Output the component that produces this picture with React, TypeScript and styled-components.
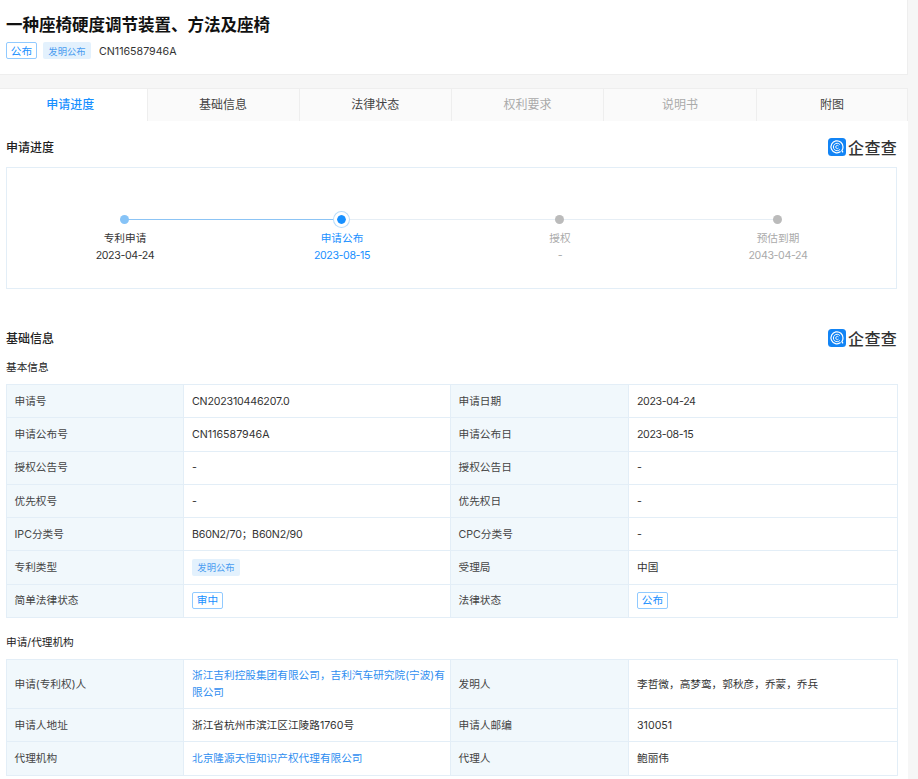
import React from "react";
import styled, { createGlobalStyle } from "styled-components";

const Global = createGlobalStyle`
  html, body { margin: 0; padding: 0; background: #f6f6f6; }
  body { font-family: Inter, "Noto Sans CJK SC", "Noto Sans", sans-serif; color: #333; }
  #root { width: 918px; height: 779px; overflow: hidden; }
`;
const Page = styled.div`
  width: 908px;
  display: flex;
  flex-direction: column;
  gap: 13px;
`;
const Header = styled.header`
  background: #fff;
  border: 1px solid #eee;
  border-width: 0 1px 1px 0;
  height: 75px;
  box-sizing: border-box;
  padding: 13px 6px 0;
`;
const Title = styled.h1`
  margin: 0;
  font-size: 16.5px;
  line-height: 24px;
  font-weight: 700;
  color: #111;
`;
const TagRow = styled.div`
  display: flex;
  align-items: center;
  margin-top: 5px;
  height: 17px;
`;
const OutlineTag = styled.span`
  display: inline-flex;
  align-items: center;
  justify-content: center;
  box-sizing: border-box;
  width: 31px;
  height: 17px;
  border: 1px solid #91caff;
  border-radius: 2px;
  font-size: 10.67px;
  color: #1890ff;
  background: #fff;
`;
const FillTag = styled.span`
  display: inline-flex;
  align-items: center;
  justify-content: center;
  width: 48px;
  height: 17px;
  border-radius: 2px;
  font-size: 9.33px;
  color: #4a9cf0;
  background: #e3f1fd;
`;
const PatentNo = styled.span`
  margin-left: 8px;
  padding-top: 2px;
  font-size: 10.67px;
  color: #333;
`;
const Gapped = styled.span`
  margin-left: 6px;
  display: inline-flex;
`;
const Tabs = styled.nav`
  display: grid;
  grid-template-columns: 147.5px 152px 152.5px 152px 153px 1fr;
  height: 33px;
  box-sizing: border-box;
  background: #fafafa;
  border-top: 1px solid #eee;
  border-right: 1px solid #eee;
`;
const Tab = styled.div<{ $active?: boolean; $disabled?: boolean }>`
  display: flex;
  align-items: center;
  justify-content: center;
  box-sizing: border-box;
  padding: 0 ${(p) => (p.$active ? 6 : 0)}px 3px 0;
  font-size: 12px;
  background: ${(p) => (p.$active ? "#fff" : "transparent")};
  color: ${(p) => (p.$active ? "#1890ff" : p.$disabled ? "#aaa" : "#444")};
  font-weight: ${(p) => (p.$active ? 500 : 400)};
  border-right: 1px solid #eee;
  &:last-child { border-right: 0; }
`;
const Content = styled.main`
  margin-top: -13px;
  background: #fff;
  padding: 0 11px 0 6px;
  height: 658px;
`;
const SectionHead = styled.div<{ $top: number }>`
  display: flex;
  justify-content: space-between;
  align-items: center;
  height: 20px;
  padding-top: ${(p) => p.$top}px;
`;
const SectionTitle = styled.h2`
  margin: 0;
  padding-top: 2px;
  font-size: 12px;
  line-height: 20px;
  font-weight: 500;
  color: #222;
`;
const Logo = styled.div`
  display: flex;
  align-items: center;
  gap: 2px;
`;
const LogoText = styled.span`
  padding-top: 2px;
  font-size: 16px;
  line-height: 20px;
  letter-spacing: 0.4px;
  color: #333;
  width: 49px;
  white-space: nowrap;
  font-weight: 500;
`;
const ProgressBox = styled.div`
  margin-top: 10px;
  height: 122px;
  box-sizing: border-box;
  border: 1px solid #e3eef7;
  display: grid;
  grid-template-columns: 217px 218px 218px 1fr;
  padding: 45px 0 0 8px;
`;
const Step = styled.div`
  display: flex;
  flex-direction: column;
  align-items: center;
  width: 218px;
  position: relative;
`;
const Connector = styled.span<{ $done?: boolean }>`
  position: absolute;
  top: 5.5px;
  left: 109px;
  width: 218px;
  height: 1px;
  background: ${(p) => (p.$done ? "#8cc4f5" : "#e6eef5")};
`;
const DotSlot = styled.div`
  height: 12px;
  display: flex;
  align-items: center;
  justify-content: center;
  position: relative;
  z-index: 1;
`;
const Dot = styled.span<{ $color: string }>`
  width: 9px;
  height: 9px;
  border-radius: 50%;
  background: ${(p) => p.$color};
`;
const CurrentDot = styled.span`
  box-sizing: border-box;
  width: 15px;
  height: 15px;
  border-radius: 50%;
  background: #1890ff;
  border: 3px solid #fff;
  box-shadow: 0 0 0 1px #b8dcfb;
  background-clip: padding-box;
`;
const StepLabel = styled.div<{ $color: string }>`
  margin-top: 5px;
  padding-left: 2px;
  font-size: 10.67px;
  line-height: 17px;
  color: ${(p) => p.$color};
  text-align: center;
`;
const DateText = styled.span`
  letter-spacing: -0.4px;
`;
const NumberText = styled.span`
  letter-spacing: -0.2px;
`;
const SubTitle = styled.h3<{ $top: number }>`
  margin: ${(p) => p.$top}px 0 0;
  font-size: 10.67px;
  line-height: 16px;
  font-weight: 400;
  color: #222;
`;
const Table = styled.table<{ $top: number }>`
  margin-top: ${(p) => p.$top}px;
  width: 891px;
  border-collapse: collapse;
  table-layout: fixed;
  font-size: 10.67px;
  line-height: 17px;
  color: #333;
`;
const Label = styled.th`
  background: #f1f8fc;
  border: 1px solid #e3eef7;
  font-weight: 400;
  text-align: left;
  padding: 7px 7px 7px 7.5px;
  color: #444;
`;
const Value = styled.td<{ $link?: boolean }>`
  border: 1px solid #e3eef7;
  padding: 7px 4px 7px 8px;
  color: ${(p) => (p.$link ? "#2f8ef0" : "#333")};
`;
const Row = styled.tr<{ $h?: number }>`
  height: ${(p) => p.$h ?? 33.3}px;
`;

const LogoMark = () => (
  <svg width="18" height="18" viewBox="0 0 18 18" aria-hidden="true">
    <rect width="18" height="18" rx="3.5" fill="#1284f5" />
    <path d="M12.6 13.6A6 6 0 1 1 15 9c0 1.4-.4 2.7-1.1 3.7l1.1 1.6" fill="none" stroke="#fff" strokeWidth="1.2" />
    <path d="M11.9 11.4A3.7 3.7 0 1 1 11.9 6.6" fill="none" stroke="#fff" strokeWidth="1" />
    <path d="M10.5 7.9a1.6 1.6 0 1 0 0 2.2" fill="none" stroke="#fff" strokeWidth="0.9" />
  </svg>
);
const Brand = () => (
  <Logo>
    <LogoMark />
    <LogoText>企查查</LogoText>
  </Logo>
);

const steps = [
  { name: "专利申请", date: "2023-04-24", color: "#333", dot: "#86c3f7", line: true, done: true },
  { name: "申请公布", date: "2023-08-15", color: "#1890ff", current: true, line: true },
  { name: "授权", date: "-", color: "#aaa", dot: "#bbb", line: true },
  { name: "预估到期", date: "2043-04-24", color: "#aaa", dot: "#bbb" },
];

const App = () => (
  <>
    <Global />
    <Page>
      <Header>
        <Title>一种座椅硬度调节装置、方法及座椅</Title>
        <TagRow>
          <OutlineTag>公布</OutlineTag>
          <Gapped><FillTag>发明公布</FillTag></Gapped>
          <PatentNo>CN116587946A</PatentNo>
        </TagRow>
      </Header>
      <Tabs>
        <Tab $active>申请进度</Tab>
        <Tab>基础信息</Tab>
        <Tab>法律状态</Tab>
        <Tab $disabled>权利要求</Tab>
        <Tab $disabled>说明书</Tab>
        <Tab>附图</Tab>
      </Tabs>
      <Content>
        <SectionHead $top={16}>
          <SectionTitle>申请进度</SectionTitle>
          <Brand />
        </SectionHead>
        <ProgressBox>
          {steps.map((s) => (
            <Step key={s.name}>
              {s.line && <Connector $done={s.done} />}
              <DotSlot>{s.current ? <CurrentDot /> : <Dot $color={s.dot as string} />}</DotSlot>
              <StepLabel $color={s.color}>{s.name}<br /><DateText>{s.date}</DateText></StepLabel>
            </Step>
          ))}
        </ProgressBox>
        <SectionHead $top={39}>
          <SectionTitle>基础信息</SectionTitle>
          <Brand />
        </SectionHead>
        <SubTitle $top={12}>基本信息</SubTitle>
        <Table $top={8}>
          <colgroup><col width="177" /><col width="267" /><col width="178" /><col width="269" /></colgroup>
          <tbody>
            <Row><Label>申请号</Label><Value><NumberText>CN202310446207.0</NumberText></Value><Label>申请日期</Label><Value><DateText>2023-04-24</DateText></Value></Row>
            <Row><Label>申请公布号</Label><Value>CN116587946A</Value><Label>申请公布日</Label><Value><DateText>2023-08-15</DateText></Value></Row>
            <Row><Label>授权公告号</Label><Value>-</Value><Label>授权公告日</Label><Value>-</Value></Row>
            <Row><Label>优先权号</Label><Value>-</Value><Label>优先权日</Label><Value>-</Value></Row>
            <Row><Label>IPC分类号</Label><Value><NumberText>B60N2/70；B60N2/90</NumberText></Value><Label>CPC分类号</Label><Value>-</Value></Row>
            <Row><Label>专利类型</Label><Value><FillTag>发明公布</FillTag></Value><Label>受理局</Label><Value>中国</Value></Row>
            <Row><Label>简单法律状态</Label><Value><OutlineTag>审中</OutlineTag></Value><Label>法律状态</Label><Value><OutlineTag>公布</OutlineTag></Value></Row>
          </tbody>
        </Table>
        <SubTitle $top={17}>申请/代理机构</SubTitle>
        <Table $top={8}>
          <colgroup><col width="177" /><col width="267" /><col width="178" /><col width="269" /></colgroup>
          <tbody>
            <Row $h={49}><Label>申请(专利权)人</Label><Value $link>浙江吉利控股集团有限公司，吉利汽车研究院(宁波)有限公司</Value><Label>发明人</Label><Value>李哲微，高梦鸾，郭秋彦，乔蒙，乔兵</Value></Row>
            <Row><Label>申请人地址</Label><Value>浙江省杭州市滨江区江陵路1760号</Value><Label>申请人邮编</Label><Value>310051</Value></Row>
            <Row><Label>代理机构</Label><Value $link>北京隆源天恒知识产权代理有限公司</Value><Label>代理人</Label><Value>鲍丽伟</Value></Row>
          </tbody>
        </Table>
      </Content>
    </Page>
  </>
);
export default App;
